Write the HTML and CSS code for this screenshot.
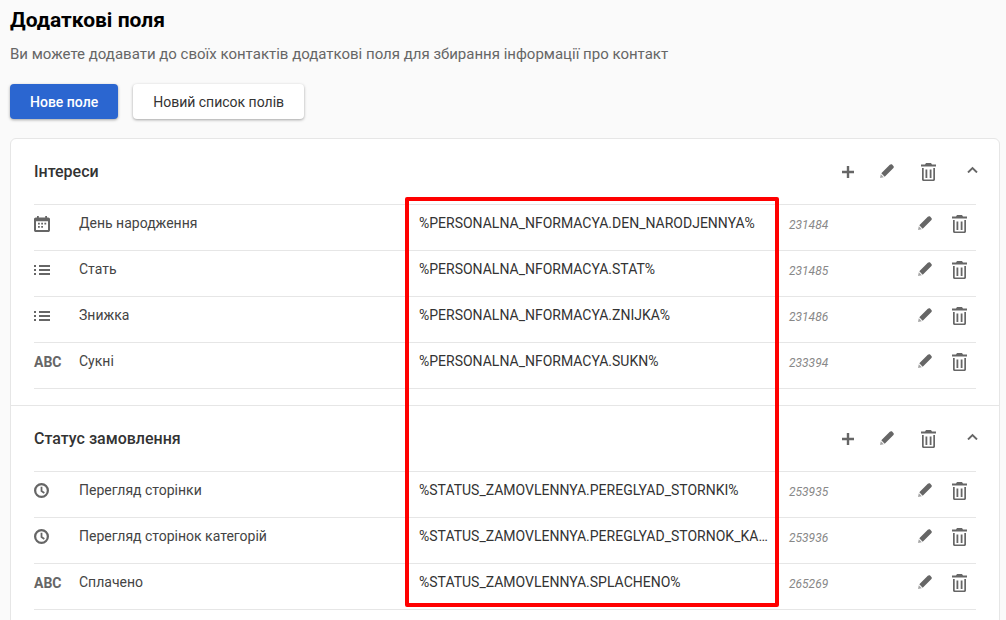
FILE: index.html
```html
<!DOCTYPE html>
<html lang="uk">
<head>
  <meta charset="UTF-8">
  <meta name="viewport" content="width=device-width, initial-scale=1.0">
  <title>Додаткові поля</title>
  <link rel="stylesheet" href="styles.css">
</head>
<body>
  <!-- Icon set -->
  <svg class="sprite" width="0" height="0" aria-hidden="true">
    <symbol id="i-date" viewBox="0 0 16 16"><path fill-rule="evenodd" d="M3 0h1.800v1.500h6.400V0H13v1.500h1.200c1 0 1.800.8 1.800 1.800v10.900c0 1-.8 1.800-1.800 1.800H1.800C.8 16 0 15.200 0 14.200V3.300c0-1 .8-1.800 1.800-1.800H3zM2 5.200V14h12V5.200z"/><path d="M4 6.800h1.800v1.800H4zm3.200 0H9v1.800H7.200zm3.200 0h1.800v1.800h-1.800zM4 10h1.800v1.800H4zm3.200 0H9v1.800H7.200z"/></symbol>
    <symbol id="i-list" viewBox="0 0 16 10"><path d="M0 0h2v2H0zm0 4h2v2H0zm0 4h2v2H0zM5 0h11v2H5zm0 4h11v2H5zm0 4h11v2H5z"/></symbol>
    <symbol id="i-clock" viewBox="0 0 16 16"><circle cx="8" cy="8" r="6.800" fill="none" stroke="currentColor" stroke-width="2.400"/><path d="M8 4v4.500l3 2.200" fill="none" stroke="currentColor" stroke-width="1.900"/></symbol>
    <symbol id="i-edit" viewBox="0 0 14 14"><path opacity=".6" d="M.8 10.200 0 14l3.800-.8z"/><path d="M1.300 9.300 9.800.8c.8-.8 1.700-.8 2.300-.2l1.300 1.300c.6.6.6 1.500-.2 2.300l-8.500 8.500z"/></symbol>
    <symbol id="i-trash" viewBox="0 0 15 18"><path d="M5 0h5l1 1.500h4v2H0v-2h4zM1 5h1.700v11c0 .4.3.6.6.6h8.400c.3 0 .6-.2.6-.6V5H14v11.500c0 .9-.7 1.500-1.500 1.500h-10C1.700 18 1 17.400 1 16.500zM4.500 6.500h1.800V15H4.500zm4.200 0h1.800V15H8.700z"/></symbol>
    <symbol id="i-add" viewBox="0 0 12 12"><path d="M4.800 0h2.400v4.800H12v2.400H7.200V12H4.800V7.200H0V4.800h4.800z"/></symbol>
    <symbol id="i-up" viewBox="0 0 11 7"><path d="M1 6.500 5.500 2 10 6.500" fill="none" stroke="currentColor" stroke-width="1.900"/></symbol>
  </svg>

  <h1 class="title">Додаткові поля</h1>
  <p class="subtitle">Ви можете додавати до своїх контактів додаткові поля для збирання інформації про контакт</p>

  <div class="actions">
    <button class="btn btn-primary">Нове поле</button>
    <button class="btn">Новий список полів</button>
  </div>

  <div class="card">
    <section class="group">
      <header class="group-head">
        <h2>Інтереси</h2>
        <div class="group-tools">
          <svg class="icon add"><use href="#i-add"/></svg>
          <svg class="icon edit"><use href="#i-edit"/></svg>
          <svg class="icon trash"><use href="#i-trash"/></svg>
          <svg class="icon up"><use href="#i-up"/></svg>
        </div>
      </header>
      <div class="row">
        <span class="type"><svg class="icon date"><use href="#i-date"/></svg></span>
        <span class="name">День народження</span>
        <span class="code">%PERSONALNA_NFORMACYA.DEN_NARODJENNYA%</span>
        <span class="id">231484</span>
        <span class="row-tools"><svg class="icon edit"><use href="#i-edit"/></svg><svg class="icon trash"><use href="#i-trash"/></svg></span>
      </div>
      <div class="row">
        <span class="type"><svg class="icon list"><use href="#i-list"/></svg></span>
        <span class="name">Стать</span>
        <span class="code">%PERSONALNA_NFORMACYA.STAT%</span>
        <span class="id">231485</span>
        <span class="row-tools"><svg class="icon edit"><use href="#i-edit"/></svg><svg class="icon trash"><use href="#i-trash"/></svg></span>
      </div>
      <div class="row">
        <span class="type"><svg class="icon list"><use href="#i-list"/></svg></span>
        <span class="name">Знижка</span>
        <span class="code">%PERSONALNA_NFORMACYA.ZNIJKA%</span>
        <span class="id">231486</span>
        <span class="row-tools"><svg class="icon edit"><use href="#i-edit"/></svg><svg class="icon trash"><use href="#i-trash"/></svg></span>
      </div>
      <div class="row">
        <span class="type abc">ABC</span>
        <span class="name">Сукні</span>
        <span class="code">%PERSONALNA_NFORMACYA.SUKN%</span>
        <span class="id">233394</span>
        <span class="row-tools"><svg class="icon edit"><use href="#i-edit"/></svg><svg class="icon trash"><use href="#i-trash"/></svg></span>
      </div>
    </section>

    <section class="group">
      <header class="group-head">
        <h2>Статус замовлення</h2>
        <div class="group-tools">
          <svg class="icon add"><use href="#i-add"/></svg>
          <svg class="icon edit"><use href="#i-edit"/></svg>
          <svg class="icon trash"><use href="#i-trash"/></svg>
          <svg class="icon up"><use href="#i-up"/></svg>
        </div>
      </header>
      <div class="row">
        <span class="type"><svg class="icon clock"><use href="#i-clock"/></svg></span>
        <span class="name">Перегляд сторінки</span>
        <span class="code">%STATUS_ZAMOVLENNYA.PEREGLYAD_STORNKI%</span>
        <span class="id">253935</span>
        <span class="row-tools"><svg class="icon edit"><use href="#i-edit"/></svg><svg class="icon trash"><use href="#i-trash"/></svg></span>
      </div>
      <div class="row">
        <span class="type"><svg class="icon clock"><use href="#i-clock"/></svg></span>
        <span class="name">Перегляд сторінок категорій</span>
        <span class="code">%STATUS_ZAMOVLENNYA.PEREGLYAD_STORNOK_KA…</span>
        <span class="id">253936</span>
        <span class="row-tools"><svg class="icon edit"><use href="#i-edit"/></svg><svg class="icon trash"><use href="#i-trash"/></svg></span>
      </div>
      <div class="row">
        <span class="type abc">ABC</span>
        <span class="name">Сплачено</span>
        <span class="code">%STATUS_ZAMOVLENNYA.SPLACHENO%</span>
        <span class="id">265269</span>
        <span class="row-tools"><svg class="icon edit"><use href="#i-edit"/></svg><svg class="icon trash"><use href="#i-trash"/></svg></span>
      </div>
    </section>
  </div>

  <!-- Red annotation drawn over the screenshot -->
  <div class="highlight"></div>
</body>
</html>
```
FILE: styles.css
```css
/* Reset */
* {
  box-sizing: border-box;
  margin: 0;
  padding: 0;
}
html, body {
  height: 620px;
  overflow: hidden;
}
body {
  font-family: 'Roboto', sans-serif;
  background: #fafafa;
  color: #333;
  padding: 9px 6px 0 10px;
  position: relative;
}
.sprite {
  position: absolute;
}

/* Header */
.title {
  font-size: 21px;
  line-height: 22px;
  font-weight: 700;
  color: #000;
}
.subtitle {
  margin-top: 13px;
  font-size: 15px;
  line-height: 20px;
  color: #666;
}
.actions {
  display: flex;
  gap: 15px;
  margin-top: 20px;
}
.btn {
  height: 35px;
  padding: 0 20px;
  border: 0;
  border-radius: 4px;
  background: #fff;
  color: #333;
  font-family: inherit;
  font-size: 14px;
  box-shadow: 0 1px 3px rgba(0, 0, 0, 0.35);
}
.btn-primary {
  background: #2b66d0;
  color: #fff;
  font-weight: 500;
}

/* Card */
.card {
  margin-top: 19px;
  border: 1px solid #e6e6e6;
  border-radius: 6px;
  background: #fff;
}
.group {
  padding: 0 23px 16px;
}
.group + .group {
  border-top: 1px solid #e6e6e6;
}
.group-head {
  display: flex;
  justify-content: space-between;
  align-items: center;
  height: 65px;
}
.group-head h2 {
  font-size: 16px;
  font-weight: 500;
  color: #333;
}
.group-tools {
  display: flex;
  align-items: center;
}

/* Icons */
.icon {
  display: block;
  fill: #666;
  color: #666;
}
.icon.add {
  width: 12px;
  height: 12px;
}
.icon.edit {
  width: 14px;
  height: 14px;
}
.icon.trash {
  width: 15px;
  height: 18px;
}
.icon.up {
  width: 11px;
  height: 7px;
}
.icon.date {
  width: 16px;
  height: 16px;
}
.icon.list {
  width: 16px;
  height: 10px;
}
.icon.clock {
  width: 15px;
  height: 15px;
}
.group-tools .edit {
  margin-left: 26px;
  margin-top: -2px;
}
.group-tools .trash {
  margin-left: 27px;
}
.group-tools .up {
  margin-left: 31px;
  margin-right: -2px;
  margin-top: -4px;
}

/* Rows */
.row {
  display: flex;
  align-items: center;
  height: 46px;
  padding-bottom: 10px;
  border-top: 1px solid #e6e6e6;
  font-size: 14px;
}
.group .row:last-child {
  border-bottom: 1px solid #e6e6e6;
  height: 47px;
}
.type {
  width: 45px;
  flex: none;
  margin-top: 2px;
}
.abc {
  font-size: 14px;
  font-weight: 700;
  color: #666;
}
.name {
  width: 340px;
  flex: none;
  color: #444;
}
.code {
  width: 349px;
  flex: none;
  color: #333;
  white-space: nowrap;
}
.id {
  margin-top: 4px;
  margin-left: 21px;
  width: 129px;
  flex: none;
  font-size: 12px;
  font-style: italic;
  color: #888;
}
.row-tools {
  display: flex;
  align-items: center;
  gap: 20px;
  margin-top: 2px;
}
.row-tools .edit {
  margin-top: -2px;
}

.highlight {
  position: absolute;
  left: 405px;
  top: 197px;
  width: 374px;
  height: 410px;
  border: 4px solid #f00;
  border-radius: 2px;
}
```
